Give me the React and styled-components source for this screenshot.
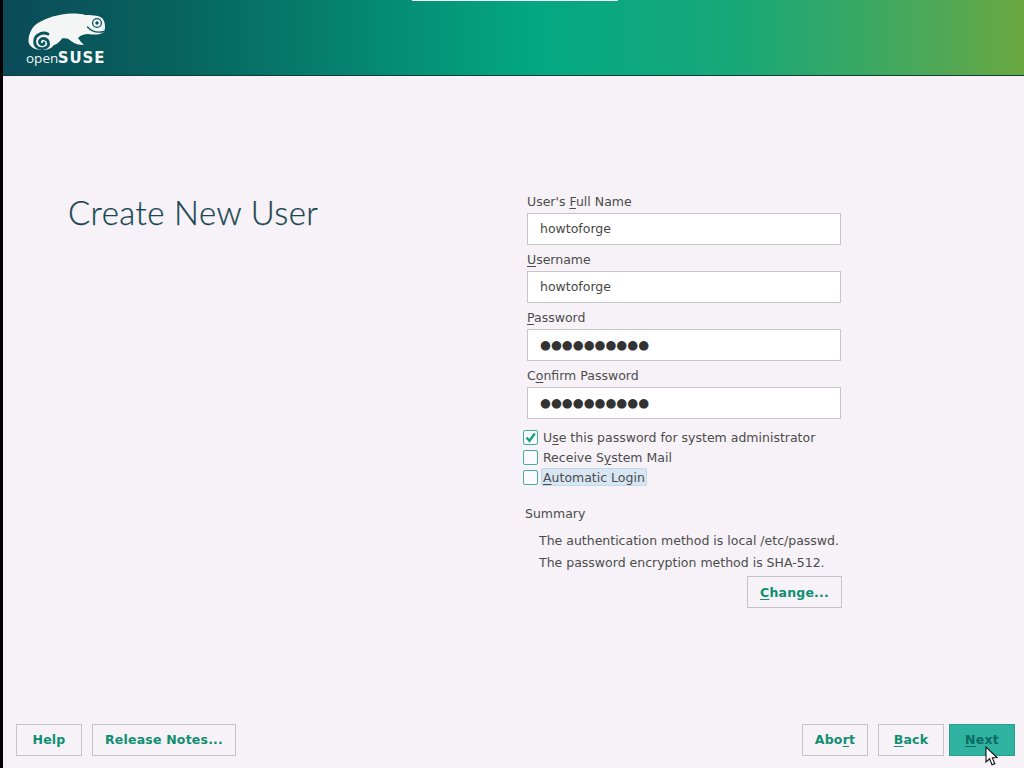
import styled, { createGlobalStyle } from 'styled-components';

const GlobalStyle = createGlobalStyle`
  html, body { margin: 0; padding: 0; background: #000; }
  body { font-family: "DejaVu Sans", sans-serif; }
  * { box-sizing: border-box; }
`;

const Screen = styled.div`
  position: relative;
  width: 1024px;
  height: 768px;
  overflow: hidden;
  display: flex;
  flex-direction: column;
  padding-left: 3px;
  background: #000;
`;

const Header = styled.header`
  position: relative;
  flex: none;
  height: 76px;
  display: flex;
  align-items: flex-start;
  padding: 12px 0 0 23px;
  background: linear-gradient(90deg, #0b4a58 0%, #07655f 18%, #06806f 32%, #03a883 52%, #18a878 72%, #4aa85a 90%, #6aa840 100%);
  border-bottom: 1px solid #123c3a;
`;

const ProgressMark = styled.div`
  position: absolute;
  top: 0;
  left: 409px;
  width: 206px;
  height: 1px;
  background: #f4f4f4;
`;

const Logo = styled.div`
  width: 82px;
  display: flex;
  flex-direction: column;
  color: #f3f6f5;

  svg {
    display: block;
  }
`;

const LogoWord = styled.div`
  margin-top: -2px;
  font-family: "Open Sans", sans-serif;
  font-size: 13.5px;
  line-height: 16px;
  white-space: nowrap;

  b {
    margin-left: -0.5px;
    font-family: "DejaVu Sans", sans-serif;
    font-size: 15px;
    font-weight: 700;
    letter-spacing: 0.9px;
  }
`;

const Body = styled.main`
  flex: 1;
  display: flex;
  background: #f6f2f7;
  padding-top: 118px;
`;

const TitleColumn = styled.div`
  width: 524px;
  padding-left: 65px;
`;

const Title = styled.h1`
  margin: -2px 0 0;
  font-family: Lato, sans-serif;
  font-size: 33px;
  line-height: 40px;
  font-weight: 300;
  color: #1a4652;
  letter-spacing: 0.4px;
  -webkit-text-stroke: 0.25px #1a4652;
`;

const FormColumn = styled.section`
  width: 316px;
  display: flex;
  flex-direction: column;
  color: #3f3f3f;
  font-size: 12.5px;
`;

const FieldLabel = styled.label`
  display: block;
  height: 19px;
  line-height: 15px;
  margin-top: ${(p) => (p.$first ? '0' : '7px')};
  color: #4c4c4c;
`;

const Field = styled.div`
  width: 314px;
  height: 32px;
  line-height: 30px;
  padding-left: 12px;
  background: #fff;
  border: 1px solid #c6c6c6;
  color: ${(p) => (p.$secret ? '#333' : '#474747')};
  font-size: 12.5px;
`;

const Checks = styled.div`
  display: flex;
  flex-direction: column;
  gap: 4px;
  margin: 10px 0 0 -4px;
`;

const CheckRow = styled.div`
  display: flex;
  align-items: center;
  gap: 5px;
  height: 16px;
`;

const CheckBox = styled.span`
  width: 15px;
  height: 15px;
  flex: none;
  display: flex;
  align-items: center;
  justify-content: center;
  background: #fbf9fb;
  border: 1px solid #45ad9a;
  border-radius: 2px;
`;

const CheckLabel = styled.span`
  height: 18px;
  padding: 0 ${(p) => (p.$focus ? '1px' : '0')};
  margin-left: ${(p) => (p.$focus ? '-2px' : '0')};
  color: #4c4c4c;
  background: ${(p) => (p.$focus ? '#d8e6f3' : 'transparent')};
  border: ${(p) => (p.$focus ? '1px solid #c3d8ea' : 'none')};
  border-radius: 2px;
  line-height: ${(p) => (p.$focus ? '17px' : '19px')};
  white-space: nowrap;
`;

const SummaryHeading = styled.div`
  margin: 20px 0 0 -2px;
  height: 18px;
  line-height: 18px;
  color: #4c4c4c;
`;

const SummaryLine = styled.p`
  margin: ${(p) => (p.$first ? '9px' : '4px')} 0 0 12px;
  height: 18px;
  line-height: 18px;
  color: #4c4c4c;
  white-space: nowrap;
`;

const ChangeRow = styled.div`
  display: flex;
  justify-content: flex-end;
  margin-top: 4px;
  padding-right: 1px;
`;

const Button = styled.button`
  flex: none;
  width: ${(p) => p.$width}px;
  height: 32px;
  margin-left: ${(p) => p.$gap || 0}px;
  padding: 0;
  font-family: "DejaVu Sans", sans-serif;
  font-size: 12.5px;
  font-weight: 700;
  letter-spacing: 0.2px;
  color: ${(p) => (p.$primary ? '#0d6a63' : '#0f8f71')};
  background: ${(p) => (p.$primary ? '#2fb3a0' : '#f6f2f7')};
  border: 1px solid ${(p) => (p.$primary ? '#2a9d8b' : '#c6c3c6')};
`;

const Footer = styled.footer`
  flex: none;
  height: 44px;
  display: flex;
  align-items: flex-start;
  padding: 0 9px 0 13px;
  background: #f6f2f7;

  ${Button} {
    padding-bottom: 2px;
  }
`;

const FooterSpacer = styled.div`
  flex: 1;
`;

const Cursor = styled.svg`
  position: absolute;
  left: 985px;
  top: 746px;
`;

const Key = styled.span`
  text-decoration: underline;
  text-underline-offset: 2px;
`;

// page coordinates, so the viewBox starts where the logo sits
const Chameleon = () => (
  <svg width="82" height="40" viewBox="26 12 82 40">
    <path
      fill="#f3f6f5"
      d="M28.5 40C29 32 33 26 38 23C46 18 58 14 72 13.5C78 13.5 83 14 85 15C90 15 98 15 102 18C105 21 106 27 104 32C100 35 94 35 88 34C84 34 81 35 78 38C80 41 82 43 84 45C79 45 75 44 71 41C68 38 65 38 62 38.5C60 41 58 44 54 45C51 49 47 50 42 50C34 50 28 46 28.5 40Z"
    />
    <path
      fill="none"
      stroke="#0a5560"
      strokeWidth="2.8"
      strokeLinecap="round"
      d="M44 43C44 45 41 45 40 43.5C38.5 41 41 38 44 38.5C48 39 49.5 43 48 46C46 49 40 49.5 37 47C33.5 44 34 37.5 38 35C41 33 45 32.5 48 34"
    />
    <circle cx="97" cy="23" r="4.4" fill="none" stroke="#0a5560" strokeWidth="1.3" />
    <circle cx="97" cy="23" r="1.7" fill="#0a5560" />
    <path fill="none" stroke="#0a5560" strokeWidth="1.3" strokeLinecap="round" d="M87.5 27C92 32 98 33 104 31.5" />
  </svg>
);

const Check = () => (
  <svg width="11" height="11" viewBox="0 0 11 11">
    <path fill="none" stroke="#19a088" strokeWidth="2.4" d="M1.5 5.5L4.5 8.8L9.8 1.5" />
  </svg>
);

const PASSWORD_DOTS = '●●●●●●●●●●';

export default function App() {
  return (
    <Screen>
      <GlobalStyle />
      <Header>
        <ProgressMark />
        <Logo>
          <Chameleon />
          <LogoWord>
            open<b>SUSE</b>
          </LogoWord>
        </Logo>
      </Header>
      <Body>
        <TitleColumn>
          <Title>Create New User</Title>
        </TitleColumn>
        <FormColumn>
          <FieldLabel $first>
            User's <Key>F</Key>ull Name
          </FieldLabel>
          <Field>howtoforge</Field>
          <FieldLabel>
            <Key>U</Key>sername
          </FieldLabel>
          <Field>howtoforge</Field>
          <FieldLabel>
            <Key>P</Key>assword
          </FieldLabel>
          <Field $secret>{PASSWORD_DOTS}</Field>
          <FieldLabel>
            C<Key>o</Key>nfirm Password
          </FieldLabel>
          <Field $secret>{PASSWORD_DOTS}</Field>
          <Checks>
            <CheckRow>
              <CheckBox>
                <Check />
              </CheckBox>
              <CheckLabel>
                U<Key>s</Key>e this password for system administrator
              </CheckLabel>
            </CheckRow>
            <CheckRow>
              <CheckBox />
              <CheckLabel>
                Receive S<Key>y</Key>stem Mail
              </CheckLabel>
            </CheckRow>
            <CheckRow>
              <CheckBox />
              <CheckLabel $focus>
                <Key>A</Key>utomatic Login
              </CheckLabel>
            </CheckRow>
          </Checks>
          <SummaryHeading>Summary</SummaryHeading>
          <SummaryLine $first>The authentication method is local /etc/passwd.</SummaryLine>
          <SummaryLine>The password encryption method is SHA-512.</SummaryLine>
          <ChangeRow>
            <Button $width={95}>
              <Key>C</Key>hange...
            </Button>
          </ChangeRow>
        </FormColumn>
      </Body>
      <Footer>
        <Button $width={66}>Help</Button>
        <Button $width={144} $gap={10}>Release Notes...</Button>
        <FooterSpacer />
        <Button $width={66}>
          Abo<Key>r</Key>t
        </Button>
        <Button $width={66} $gap={10}>
          <Key>B</Key>ack
        </Button>
        <Button $width={66} $gap={5} $primary>
          <Key>N</Key>ext
        </Button>
      </Footer>
      <Cursor width="14" height="21" viewBox="0 0 14 21">
        <path
          fill="#fff"
          stroke="#111"
          strokeWidth="1.1"
          d="M1 1V16L4.6 12.8L7 18.8L9.8 17.6L7.3 11.8L12 11.5Z"
        />
      </Cursor>
    </Screen>
  );
}
